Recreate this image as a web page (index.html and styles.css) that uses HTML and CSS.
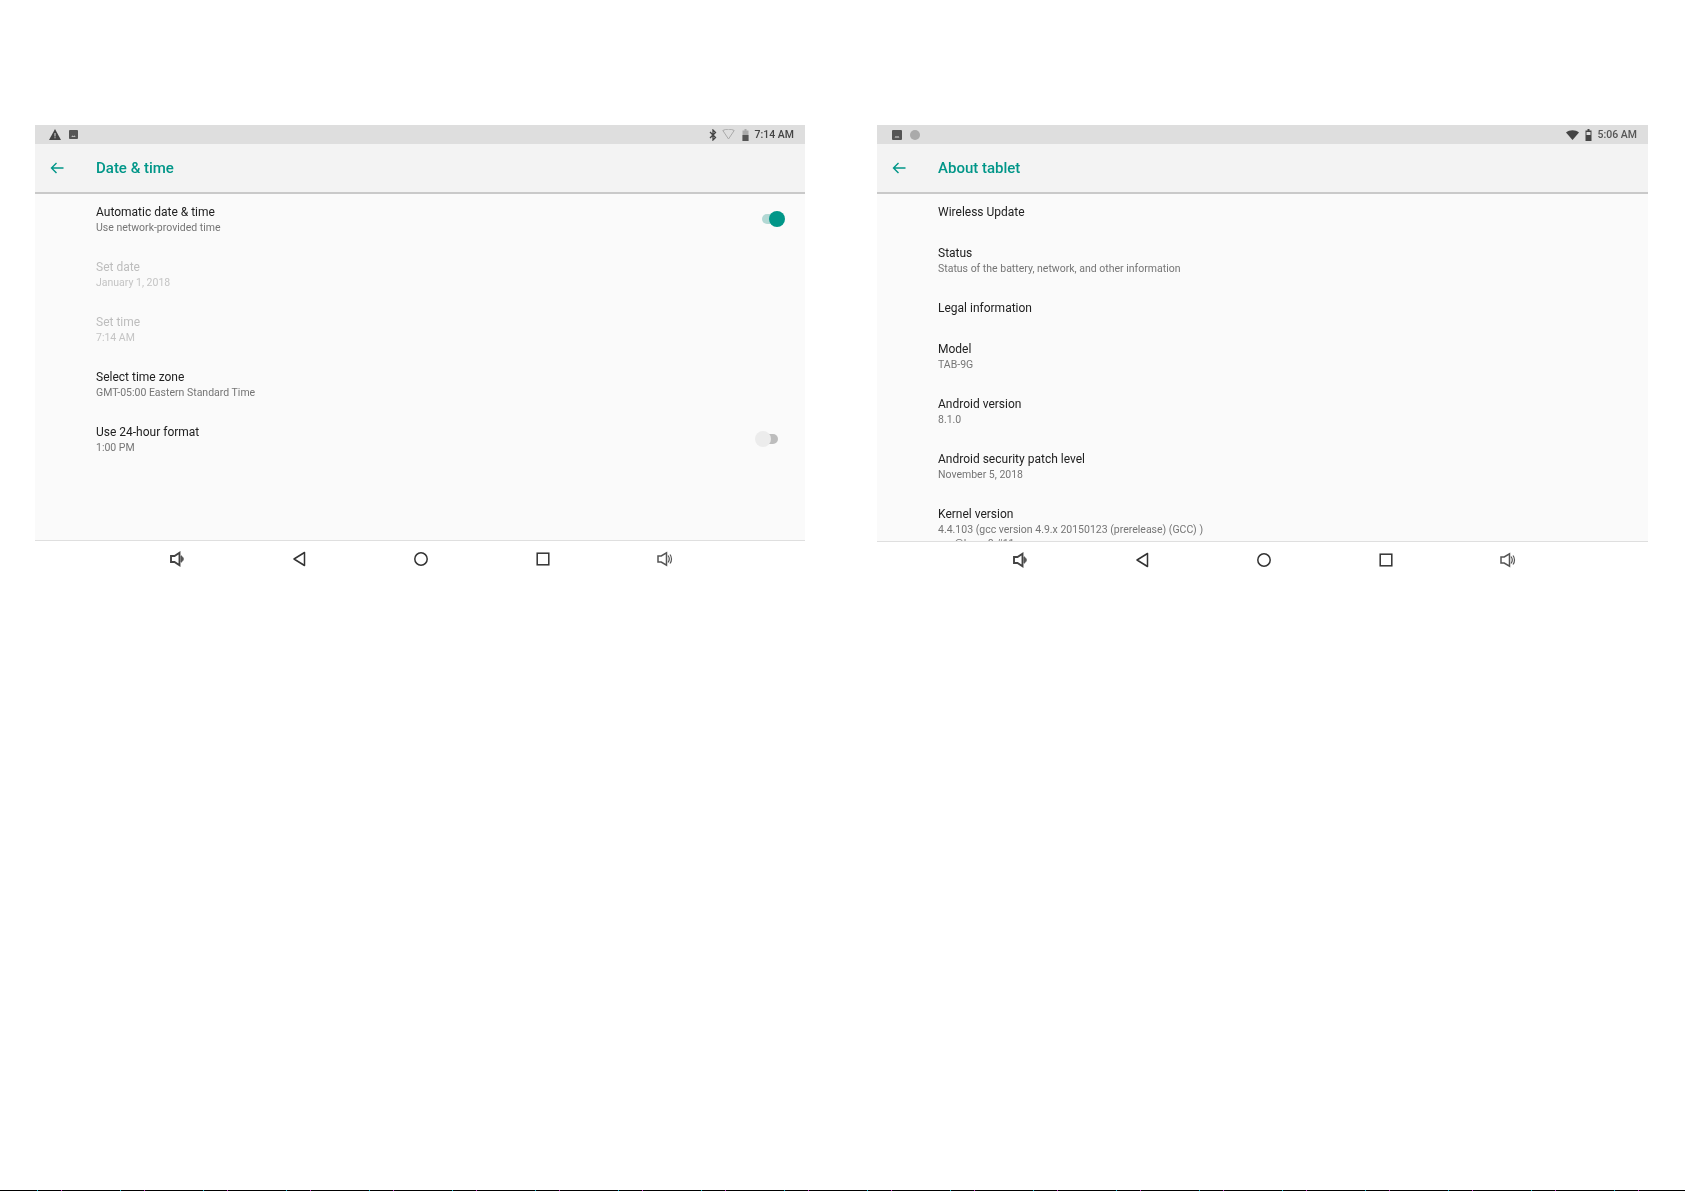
FILE: index.html
```
<!DOCTYPE html>
<html lang="en">
<head>
<meta charset="utf-8">
<title>Android settings screenshots</title>
<link rel="stylesheet" href="styles.css">
</head>
<body>
<main class="shots">
  <section class="screen">
    <header class="status">
      <div class="status-group">
        <svg class="ic warn" viewBox="0 0 12 11"><path d="M6 0 12 11H0Z" fill="#444"/><path d="M5.5 4h1v3.500h-1zM5.500 8.300h1v1h-1z" fill="#ddd"/></svg>
        <svg class="ic pic" viewBox="0 0 10 10"><rect width="10" height="10" rx="1" fill="#555"/><path d="M2.500 7.500 4 6l1 1 1-1 1.500 1.500z" fill="#ddd"/></svg>
      </div>
      <div class="status-group right-group">
        <svg class="ic bt" viewBox="0 0 8 12"><path d="M1 3 6.500 8.500 4 11V1L6.500 3.500 1 9" fill="none" stroke="#444" stroke-width="1.300"/></svg>
        <svg class="ic wifi" viewBox="0 0 13 11"><path d="M.8 1.500C4 -.3 9 -.3 12.200 1.500L6.500 10Z" fill="none" stroke="#aaa" stroke-width="1"/></svg>
        <svg class="ic batt" viewBox="0 0 7 12"><path d="M2.500 0h2v1.500H6.500V12H.5V1.500h2z" fill="#aaa"/><path d="M.5 6H6.500V12H.5z" fill="#555"/></svg>
        <span class="clock">7:14 AM</span>
      </div>
    </header>
    <div class="toolbar">
      <svg class="back-arrow" viewBox="0 0 14 12"><path d="M13.500 6H1.500M6.500 1 1.500 6l5 5" fill="none" stroke="#009688" stroke-width="1.400"/></svg>
      <h1 class="page-title">Date &amp; time</h1>
    </div>
    <div class="list">
      <div class="row">
        <div class="row-text"><div class="row-title">Automatic date &amp; time</div><div class="row-sub">Use network-provided time</div></div>
        <div class="switch on"><span class="track"></span><span class="knob"></span></div>
      </div>
      <div class="row off">
        <div class="row-text"><div class="row-title">Set date</div><div class="row-sub">January 1, 2018</div></div>
      </div>
      <div class="row off">
        <div class="row-text"><div class="row-title">Set time</div><div class="row-sub">7:14 AM</div></div>
      </div>
      <div class="row">
        <div class="row-text"><div class="row-title">Select time zone</div><div class="row-sub">GMT-05:00 Eastern Standard Time</div></div>
      </div>
      <div class="row">
        <div class="row-text"><div class="row-title">Use 24-hour format</div><div class="row-sub">1:00 PM</div></div>
        <div class="switch"><span class="track"></span><span class="knob"></span></div>
      </div>
    </div>
    <nav class="navbar">
      <svg class="nav-ic" viewBox="0 0 16 16"><path d="M2 5H5.500L10.500 1.800V14.200L5.500 11H2Z" fill="none" stroke="#444" stroke-width="1.900"/><path d="M12 4.800C15 6.300 15 9.700 12 11.200Z" fill="#555" stroke="#555"/></svg>
      <svg class="nav-ic" viewBox="0 0 16 16"><path d="M13.500 1.500V14.500L3 8Z" fill="none" stroke="#333" stroke-width="1.500" stroke-linejoin="round"/></svg>
      <svg class="nav-ic" viewBox="0 0 16 16"><circle cx="8" cy="8" r="6.200" fill="none" stroke="#333" stroke-width="1.500"/></svg>
      <svg class="nav-ic" viewBox="0 0 16 16"><rect x="2.200" y="2.200" width="11.600" height="11.600" fill="none" stroke="#333" stroke-width="1.500"/></svg>
      <svg class="nav-ic" viewBox="0 0 16 16"><path d="M1 5H4.200L9.500 1.800V14.200L4.200 11H1Z" fill="none" stroke="#555" stroke-width="1.500"/><path d="M11 4.500C12.500 6.500 12.500 9.500 11 11.500M13 3.500C15 6 15 10 13 12.500" fill="none" stroke="#555" stroke-width="1.200"/></svg>
    </nav>
  </section>

  <section class="screen second">
    <header class="status">
      <div class="status-group">
        <svg class="ic pic" viewBox="0 0 10 10"><rect width="10" height="10" rx="1" fill="#555"/><path d="M2.500 7.500 4 6l1 1 1-1 1.500 1.500z" fill="#ddd"/></svg>
        <span class="dot"></span>
      </div>
      <div class="status-group right-group">
        <svg class="ic wifi-full" viewBox="0 0 13 10"><path d="M0 2.500C3.500 -.6 9.500 -.6 13 2.500L6.500 10Z" fill="#444"/></svg>
        <svg class="ic batt" viewBox="0 0 7 12"><path d="M2.500 0h2v1.500H6.500V12H.5V1.500h2z" fill="#444"/><path d="M1.500 3h4v3h-4z" fill="#ddd"/></svg>
        <span class="clock faded">5:06 AM</span>
      </div>
    </header>
    <div class="toolbar">
      <svg class="back-arrow" viewBox="0 0 14 12"><path d="M13.500 6H1.500M6.500 1 1.500 6l5 5" fill="none" stroke="#009688" stroke-width="1.400"/></svg>
      <h1 class="page-title">About tablet</h1>
    </div>
    <div class="list">
      <div class="row single"><div class="row-text"><div class="row-title">Wireless Update</div></div></div>
      <div class="row">
        <div class="row-text"><div class="row-title">Status</div><div class="row-sub">Status of the battery, network, and other information</div></div>
      </div>
      <div class="row single"><div class="row-text"><div class="row-title">Legal information</div></div></div>
      <div class="row">
        <div class="row-text"><div class="row-title">Model</div><div class="row-sub">TAB-9G</div></div>
      </div>
      <div class="row">
        <div class="row-text"><div class="row-title">Android version</div><div class="row-sub">8.1.0</div></div>
      </div>
      <div class="row">
        <div class="row-text"><div class="row-title">Android security patch level</div><div class="row-sub">November 5, 2018</div></div>
      </div>
      <div class="row">
        <div class="row-text"><div class="row-title">Kernel version</div><div class="row-sub">4.4.103 (gcc version 4.9.x 20150123 (prerelease) (GCC) )</div><div class="row-sub row-sub-next">vsn@lpoor8 #11</div></div>
      </div>
    </div>
    <nav class="navbar">
      <svg class="nav-ic" viewBox="0 0 16 16"><path d="M2 5H5.500L10.500 1.800V14.200L5.500 11H2Z" fill="none" stroke="#444" stroke-width="1.900"/><path d="M12 4.800C15 6.300 15 9.700 12 11.200Z" fill="#555" stroke="#555"/></svg>
      <svg class="nav-ic" viewBox="0 0 16 16"><path d="M13.500 1.500V14.500L3 8Z" fill="none" stroke="#333" stroke-width="1.500" stroke-linejoin="round"/></svg>
      <svg class="nav-ic" viewBox="0 0 16 16"><circle cx="8" cy="8" r="6.200" fill="none" stroke="#333" stroke-width="1.500"/></svg>
      <svg class="nav-ic" viewBox="0 0 16 16"><rect x="2.200" y="2.200" width="11.600" height="11.600" fill="none" stroke="#333" stroke-width="1.500"/></svg>
      <svg class="nav-ic" viewBox="0 0 16 16"><path d="M1 5H4.200L9.500 1.800V14.200L4.200 11H1Z" fill="none" stroke="#555" stroke-width="1.500"/><path d="M11 4.500C12.500 6.500 12.500 9.500 11 11.500M13 3.500C15 6 15 10 13 12.500" fill="none" stroke="#555" stroke-width="1.200"/></svg>
    </nav>
  </section>
</main>
<div class="page-edge"></div>
</body>
</html>
```
FILE: styles.css
```
* { box-sizing: border-box; }
html, body { margin: 0; padding: 0; }
body {
  height: 1191px;
  background: #fff;
  font-family: Roboto, "Liberation Sans", sans-serif;
  display: flex;
  flex-direction: column;
  overflow: hidden;
}
.shots {
  display: flex;
  gap: 72px;
  padding: 125px 0 0 35px;
}
.screen {
  width: 770px;
  height: 452px;
  display: flex;
  flex-direction: column;
  filter: blur(0.35px);
}
.screen.second { width: 771px; }
.status {
  height: 19px;
  flex: none;
  background: #dedede;
  display: flex;
  align-items: center;
  justify-content: space-between;
  padding: 0 11px 0 14px;
}
.second .status { padding-left: 15px; }
.status-group { display: flex; align-items: center; gap: 8px; }
.right-group { gap: 5px; }
.ic { display: block; }
.warn { width: 12px; height: 11px; }
.pic { width: 9px; height: 9px; }
.second .pic { width: 10px; height: 10px; }
.bt { width: 8px; height: 12px; }
.wifi { width: 13px; height: 11px; margin-right: 2px; }
.wifi-full { width: 13px; height: 10px; margin-right: 1px; }
.batt { width: 7px; height: 12px; margin-right: 1px; }
.dot { width: 10px; height: 10px; border-radius: 50%; background: #aaa; }
.clock { font-size: 10.5px; font-weight: 500; color: #444; line-height: 19px; }
.clock.faded { color: #555; }
.toolbar {
  height: 50px;
  flex: none;
  background: #f3f3f3;
  border-bottom: 2px solid #c9c9c9;
  display: flex;
  align-items: center;
  padding-left: 15px;
}
.back-arrow { width: 14px; height: 12px; margin-right: 32px; flex: none; }
.page-title { margin: 0; font-size: 15px; font-weight: 500; color: #009688; line-height: 20px; }
.list {
  flex: 1;
  min-height: 0;
  overflow: hidden;
  background: #fafafa;
}
.row {
  height: 55px;
  display: flex;
  justify-content: space-between;
  align-items: flex-start;
  padding: 10px 0 0 61px;
}
.row.single { height: 41px; }
.row-text { min-width: 0; }
.row-title { font-size: 12px; line-height: 16px; color: #212121; }
.row-sub { font-size: 10.5px; line-height: 16px; color: #757575; }
.row-sub-next { margin-top: -2.5px; }
.row.off .row-title { color: #bdbdbd; }
.row.off .row-sub { color: #c4c4c4; }
.switch { position: relative; width: 23px; height: 16px; margin: 7px 27px 0 0; flex: none; }
.switch.on { margin-right: 20px; }
.track { position: absolute; right: 0; top: 3px; width: 20px; height: 10px; border-radius: 5px; background: #bdbdbd; }
.knob { position: absolute; left: 0; top: 0; width: 16px; height: 16px; border-radius: 50%; background: #ececec; }
.switch.on .track { right: auto; left: 0; background: #b2d8d4; }
.switch.on .knob { left: auto; right: 0; background: #009688; }
.navbar {
  height: 37px;
  flex: none;
  background: #fff;
  border-top: 1px solid #dfdfdf;
  display: flex;
  align-items: center;
  justify-content: space-between;
  padding: 0 132px 0 134px;
}
.nav-ic { width: 16px; height: 16px; flex: none; }
.screen.second .navbar { height: 36px; padding-left: 135px; padding-right: 132px; }
.page-edge {
  margin-top: auto;
  height: 1px;
  flex: none;
  background:
    repeating-linear-gradient(90deg, transparent 0 37px, #19c2d8 37px 38px, transparent 38px 61px, #d63bd6 61px 62px, transparent 62px 83px),
    #000;
}
```
